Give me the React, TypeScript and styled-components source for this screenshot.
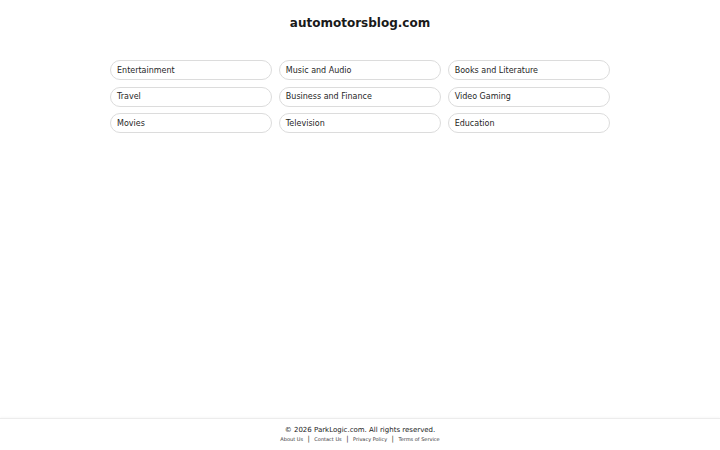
import { Fragment } from "react";
import styled, { createGlobalStyle } from "styled-components";

const GlobalStyle = createGlobalStyle`
  html, body {
    margin: 0;
    padding: 0;
    background: #ffffff;
  }
  body {
    font-family: "DejaVu Sans", Verdana, sans-serif;
    color: #1f1f1f;
  }
`;

const Page = styled.div`
  min-height: 100vh;
  display: flex;
  flex-direction: column;
`;

const Main = styled.main`
  flex: 1;
  display: flex;
  flex-direction: column;
  align-items: center;
`;

const Title = styled.h1`
  margin: 16px 0 0;
  font-size: 12px;
  line-height: 14px;
  font-weight: 700;
  color: #1a1a1a;
`;

const Grid = styled.div`
  margin-top: 30px;
  width: 500px;
  display: grid;
  grid-template-columns: repeat(3, 1fr);
  column-gap: 6.5px;
  row-gap: 6.5px;
`;

const Pill = styled.a`
  display: flex;
  align-items: center;
  height: 20px;
  box-sizing: border-box;
  padding: 0 6px;
  border: 1px solid #dcdcdc;
  border-radius: 999px;
  font-size: 8px;
  color: #1f1f1f;
  text-decoration: none;
`;

const Footer = styled.footer`
  border-top: 1px solid #ececec;
  box-shadow: 0 -1px 2px rgba(0, 0, 0, 0.03);
  padding: 7px 0 7px;
  display: flex;
  flex-direction: column;
  align-items: center;
`;

const Copyright = styled.div`
  font-size: 7px;
  line-height: 9px;
  color: #222;
`;

const Links = styled.nav`
  display: flex;
  align-items: center;
  gap: 4.5px;
  font-size: 5px;
  line-height: 8px;
`;

const FooterLink = styled.a`
  color: #333;
  text-decoration: none;
`;

const Sep = styled.span`
  font-size: 7px;
  color: #333;
`;

const categories = [
  "Entertainment",
  "Music and Audio",
  "Books and Literature",
  "Travel",
  "Business and Finance",
  "Video Gaming",
  "Movies",
  "Television",
  "Education",
];

const footerLinks = ["About Us", "Contact Us", "Privacy Policy", "Terms of Service"];

export default function App() {
  return (
    <Page>
      <GlobalStyle />
      <Main>
        <Title>automotorsblog.com</Title>
        <Grid>
          {categories.map((c) => (
            <Pill key={c} href="#">
              {c}
            </Pill>
          ))}
        </Grid>
      </Main>
      <Footer>
        <Copyright>© 2026 ParkLogic.com. All rights reserved.</Copyright>
        <Links>
          {footerLinks.map((l, i) => (
            <Fragment key={l}>
              {i > 0 && <Sep>|</Sep>}
              <FooterLink href="#">{l}</FooterLink>
            </Fragment>
          ))}
        </Links>
      </Footer>
    </Page>
  );
}
